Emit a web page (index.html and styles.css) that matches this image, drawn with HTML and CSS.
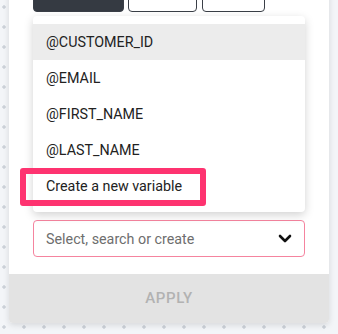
FILE: index.html
```html
<!DOCTYPE html>
<html lang="en">

<head>
   <meta charset="UTF-8">
   <meta name="viewport" content="width=device-width, initial-scale=1.0">
   <title>Variable picker</title>
   <link rel="stylesheet" href="styles.css">
</head>

<body>
   <div class="card">
      <div class="card-body">
         <div class="tabs">
            <button class="tab tab-active"></button>
            <button class="tab tab-mid"></button>
            <button class="tab tab-small"></button>
         </div>

         <div class="field">
            <ul class="menu">
               <li class="menu-item hovered">@CUSTOMER_ID</li>
               <li class="menu-item">@EMAIL</li>
               <li class="menu-item">@FIRST_NAME</li>
               <li class="menu-item">@LAST_NAME</li>
               <li class="menu-item annotated">Create a new variable</li>
            </ul>
            <div class="select">
               <span class="placeholder">Select, search or create</span>
               <svg class="chevron" width="14" height="9" viewBox="0 0 14 9">
                  <path d="M2 2l5 5 5-5" fill="none" stroke="#111" stroke-width="2.6" stroke-linecap="round" stroke-linejoin="round" />
               </svg>
            </div>
         </div>
      </div>
      <div class="apply">APPLY</div>
   </div>
</body>

</html>
```

FILE: styles.css
```css
body {
   font-family: Roboto, 'Liberation Sans', sans-serif;
   margin: 0;
   padding: 0 0 0 9px;
   height: 334px;
   overflow: hidden;
   background-color: #f3f5f8;
   background-image: radial-gradient(circle, #cdd2d9 1.4px, transparent 2px);
   background-size: 20px 20px;
   background-position: 14px 17px;
}

.card {
   width: 320px;
   margin-top: -40px;
   background-color: #fff;
   border-radius: 0 0 4px 4px;
   box-shadow: 0 2px 6px rgba(0, 0, 0, 0.12);
}

.card-body {
   padding: 16px 24px 17px;
}

.tabs {
   display: flex;
   gap: 4px;
   height: 36px;
}

.tab {
   height: 36px;
   padding: 0;
   border: 1px solid #3a3f47;
   border-radius: 4px;
   background-color: #fff;
}

.tab-active {
   width: 91px;
   background-color: #353a42;
}

.tab-mid {
   width: 69px;
}

.tab-small {
   width: 63px;
   margin-left: 1px;
}

.field {
   position: relative;
   margin-top: 208px;
}

.menu {
   position: absolute;
   left: 0;
   right: 0;
   bottom: calc(100% + 8px);
   margin: 0;
   padding: 8px 0;
   list-style: none;
   background-color: #fff;
   border-radius: 4px;
   box-shadow: 0 3px 10px rgba(0, 0, 0, 0.18);
}

.menu-item {
   position: relative;
   height: 36px;
   line-height: 36px;
   padding-left: 13px;
   font-size: 14.3px;
   color: #222;
}

.hovered {
   background-color: #ececec;
}

.annotated::after {
   content: '';
   position: absolute;
   left: -13px;
   top: 0;
   width: 174px;
   height: 26px;
   border: 6px solid #fe3370;
   border-radius: 3px;
}

.select {
   display: flex;
   align-items: center;
   justify-content: space-between;
   height: 35px;
   padding: 0 12px 0 12px;
   border: 1px solid #f5849f;
   border-radius: 4px;
}

.placeholder {
   font-size: 14.3px;
   color: #6e6e6e;
}

.chevron {
   display: block;
}

.apply {
   height: 49px;
   line-height: 49px;
   text-align: center;
   font-size: 15px;
   font-weight: 500;
   letter-spacing: 0.6px;
   color: #b2b2b2;
   background-color: #e3e3e3;
   border-radius: 0 0 4px 4px;
}
```
